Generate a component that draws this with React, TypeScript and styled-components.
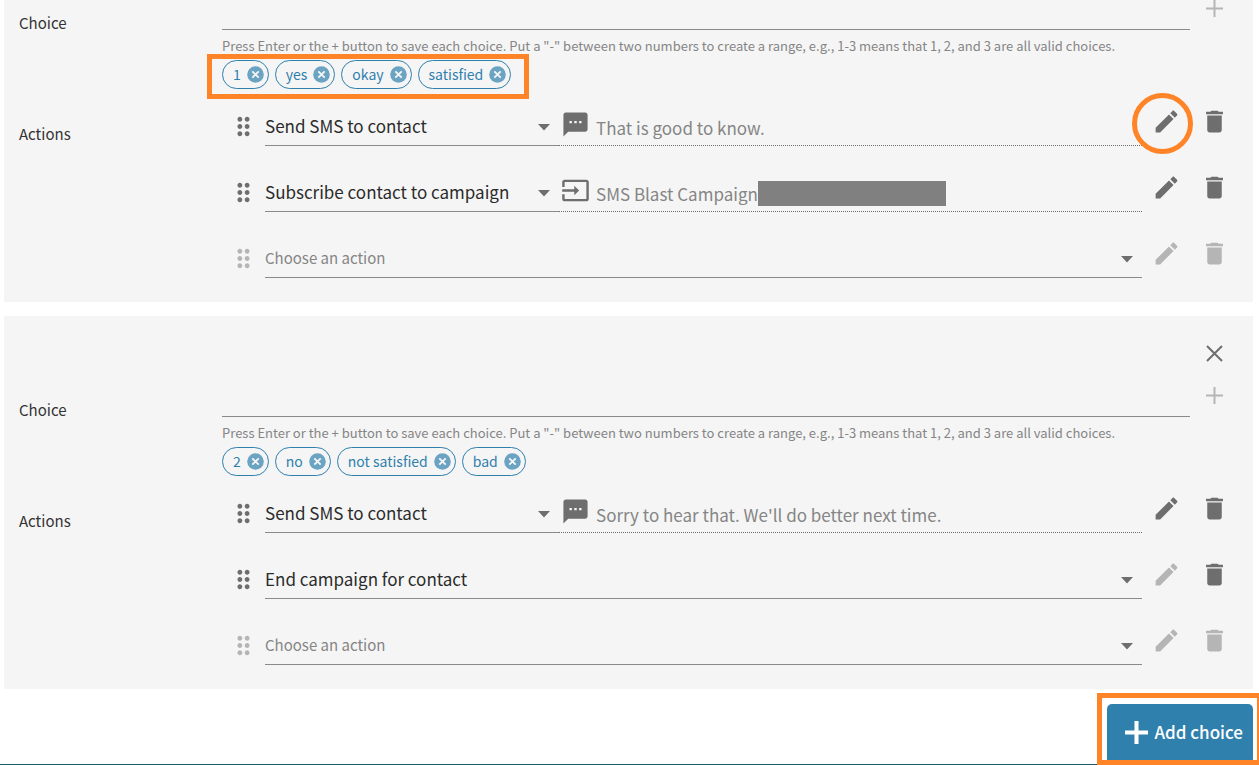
import React from "react";
import styled, { createGlobalStyle, css } from "styled-components";

const GlobalStyle = createGlobalStyle`
  *, *::before, *::after { box-sizing: border-box; }
  body {
    margin: 0;
    background: #fff;
    color: #333;
    font-family: "Noto Sans CJK SC", "Noto Sans", sans-serif;
    font-size: 15px;
    line-height: 20px;
  }
  button, input, select { font: inherit; color: inherit; }
`;

const Page = styled.main`
  position: relative;
  display: flex;
  flex-direction: column;
  min-height: 100vh;
  overflow: hidden;
`;

const CardList = styled.div`
  display: flex;
  flex-direction: column;
  gap: 14px;
  padding: 0 6px 0 4px;
`;

const Card = styled.section`
  padding: 0 24px 24px 15px;
  background: #f5f5f5;
`;

const CardHeader = styled.div`
  display: flex;
  justify-content: flex-end;
  padding: 29px 6px 25px 0;
`;

const ChoiceRow = styled.div`
  display: flex;
  align-items: flex-start;
`;

const ChoiceLabel = styled.label`
  flex: none;
  width: 203px;
  padding-top: 13px;
`;

const ChoiceInput = styled.input`
  flex: 1;
  min-width: 0;
  height: 30px;
  margin-right: 16px;
  padding: 0;
  border: 0;
  border-bottom: 1px solid #8a8a8a;
  background: transparent;
  outline: none;
`;

const IconButton = styled.button<{ $size?: number }>`
  display: flex;
  flex: none;
  align-items: center;
  justify-content: center;
  width: ${({ $size = 17 }) => $size}px;
  height: ${({ $size = 17 }) => $size}px;
  padding: 0;
  border: 0;
  background: transparent;
  color: #6e6e6e;
  cursor: pointer;
  &:disabled { color: #b5b5b5; cursor: default; }
`;

const PlusButton = styled(IconButton)`
  margin-right: 6px;
`;

const Hint = styled.p`
  margin: 0 0 5px 203px;
  padding-top: 4px;
  color: #858585;
  font-size: 13px;
  line-height: 18px;
`;

const Chips = styled.div`
  position: relative;
  display: inline-flex;
  gap: 6px;
  margin-left: 203px;
  vertical-align: top;
`;

const Chip = styled.span`
  display: flex;
  align-items: center;
  gap: 6px;
  height: 29px;
  padding: 0 4px 2px 10px;
  border: 1px solid #2f80ad;
  border-radius: 15px;
  color: #2f80ad;
  font-size: 14px;
  line-height: 20px;
`;

const ChipRemove = styled(IconButton)`
  margin-top: 2px;
  color: #6ba3c2;
`;

const Highlight = styled.span<{ $shape: "chips" | "circle" | "button" }>`
  position: absolute;
  border: 5px solid #ff8427;
  pointer-events: none;
  ${({ $shape }) => $shape === "chips" && css`inset: -6px -18px -10px -15px;`}
  ${({ $shape }) => $shape === "circle" && css`inset: -14px -12px -18px -20px; border-radius: 50%;`}
  ${({ $shape }) => $shape === "button" && css`inset: -11px -9px 0 -10px;`}
`;

const ActionsRow = styled.div`
  display: flex;
  padding-top: 12px;
`;

const ActionsLabel = styled.h3`
  flex: none;
  width: 203px;
  margin: 0;
  padding-top: 23px;
  font-size: 15px;
  font-weight: inherit;
`;

const ActionList = styled.ul`
  flex: 1;
  display: flex;
  flex-direction: column;
  gap: 21px;
  min-width: 0;
  margin: 0;
  padding: 0 0 0 7px;
  list-style: none;
`;

const ActionItem = styled.li`
  display: flex;
  height: 45px;
`;

const Handle = styled.span<{ $muted?: boolean }>`
  flex: none;
  width: 36px;
  padding-top: 11px;
  color: ${({ $muted }) => ($muted ? "#b5b5b5" : "#6e6e6e")};
`;

const SelectField = styled.div<{ $full: boolean }>`
  position: relative;
  flex: ${({ $full }) => ($full ? "1" : "0 0 294px")};
  min-width: 0;
  border-bottom: 1px solid #8a8a8a;
`;

const Select = styled.select<{ $placeholder: boolean }>`
  appearance: none;
  width: 100%;
  height: 36px;
  margin-top: 7px;
  padding: 0 32px 0 0;
  border: 0;
  background: transparent;
  outline: none;
  color: ${({ $placeholder }) => ($placeholder ? "#858585" : "#2b2b2b")};
  font-size: ${({ $placeholder }) => ($placeholder ? 15 : 17)}px;
  line-height: 30px;
`;

const Caret = styled.svg`
  position: absolute;
  top: 23px;
  right: 9px;
  pointer-events: none;
`;

const Detail = styled.div`
  flex: 1;
  display: flex;
  align-items: center;
  min-width: 0;
  padding: 9px 0 0 2px;
  border-bottom: 1px dotted #6e6e6e;
  color: #858585;
  font-size: 17px;
  line-height: 24px;
`;

const DetailIcon = styled.span`
  flex: none;
  height: 35px;
  margin-right: 6px;
  color: #6e6e6e;
`;

const Redacted = styled.span`
  width: 188px;
  height: 25px;
  background: #808080;
`;

const RowTools = styled.div`
  display: flex;
  flex: none;
  gap: 19px;
  padding: 6px 0 0 10px;
`;

const Tool = styled.span`
  position: relative;
  height: 29px;
`;

const Footer = styled.footer`
  display: flex;
  justify-content: flex-end;
  height: 76px;
  padding: 15px 6px 0 0;
  border-bottom: 1px solid #1c5a70;
`;

const AddWrap = styled.div`
  position: relative;
  height: 61px;
`;

const AddButton = styled.button`
  display: flex;
  align-items: center;
  gap: 7px;
  height: 60px;
  padding: 0 10px 4px 18px;
  border: 0;
  border-radius: 5px;
  background: #2f80ad;
  color: #fff;
  font-size: 17px;
  font-weight: 500;
  white-space: nowrap;
  cursor: pointer;
`;

const paths = {
  drag: "M11 18c0 1.1-.9 2-2 2s-2-.9-2-2 .9-2 2-2 2 .9 2 2zm-2-8c-1.1 0-2 .9-2 2s.9 2 2 2 2-.9 2-2-.9-2-2-2zm0-6c-1.1 0-2 .9-2 2s.9 2 2 2 2-.9 2-2-.9-2-2-2zm6 4c1.1 0 2-.9 2-2s-.9-2-2-2-2 .9-2 2 .9 2 2 2zm0 2c-1.1 0-2 .9-2 2s.9 2 2 2 2-.9 2-2-.9-2-2-2zm0 6c-1.1 0-2 .9-2 2s.9 2 2 2 2-.9 2-2-.9-2-2-2z",
  edit: "M3 17.25V21h3.75L17.81 9.94l-3.75-3.75L3 17.25zM20.71 7.04c.39-.39.39-1.02 0-1.41l-2.34-2.34c-.39-.39-1.02-.39-1.41 0l-1.83 1.83 3.75 3.75 1.83-1.83z",
  trash: "M6 19c0 1.1.9 2 2 2h8c1.1 0 2-.9 2-2V7H6v12zM19 4h-3.5l-1-1h-5l-1 1H5v2h14V4z",
  sms: "M20 2H4c-1.1 0-1.99.9-1.99 2L2 22l4-4h14c1.1 0 2-.9 2-2V4c0-1.1-.9-2-2-2zM9 11H7V9h2v2zm4 0h-2V9h2v2zm4 0h-2V9h2v2z",
  campaign: "M21 3.01H3c-1.1 0-2 .9-2 2V9h2V4.99h18v14.03H3V15H1v4.01c0 1.1.9 1.98 2 1.98h18c1.1 0 2-.88 2-1.98v-14c0-1.11-.9-2-2-2zM11 16l4-4-4-4v3H1v2h10v3z",
};

const Icon = ({ name }: { name: keyof typeof paths }) => (
  <svg width="29" height="29" viewBox="0 0 24 24" fill="currentColor" aria-hidden="true">
    <path d={paths[name]} />
  </svg>
);

const PlusIcon = ({ size = 17, stroke = 2 }: { size?: number; stroke?: number }) => (
  <svg width={size} height={size} viewBox="0 0 17 17" stroke="currentColor" strokeWidth={stroke} aria-hidden="true">
    <path d="M8.5 0V17M0 8.5H17" />
  </svg>
);

const CloseIcon = () => (
  <svg width="17" height="17" viewBox="0 0 17 17" stroke="currentColor" strokeWidth="2" aria-hidden="true">
    <path d="M1 1L16 16M16 1L1 16" />
  </svg>
);

const RemoveIcon = () => (
  <svg width="17" height="17" viewBox="0 0 17 17" aria-hidden="true">
    <circle cx="8.5" cy="8.5" r="8.3" fill="currentColor" />
    <path d="M5.3 5.3L11.7 11.7M11.7 5.3L5.3 11.7" stroke="#f5f5f5" strokeWidth="1.9" />
  </svg>
);

type Action = {
  value?: string;
  detail?: { icon: "sms" | "campaign"; text: string; redacted?: boolean };
  editable?: boolean;
  circled?: boolean;
};

type Choice = { id: string; chips: string[]; actions: Action[]; partial?: boolean };

const choices: Choice[] = [
  {
    id: "first",
    partial: true,
    chips: ["1", "yes", "okay", "satisfied"],
    actions: [
      { value: "Send SMS to contact", detail: { icon: "sms", text: "That is good to know." }, editable: true, circled: true },
      { value: "Subscribe contact to campaign", detail: { icon: "campaign", text: "SMS Blast Campaign", redacted: true }, editable: true },
      {},
    ],
  },
  {
    id: "second",
    chips: ["2", "no", "not satisfied", "bad"],
    actions: [
      { value: "Send SMS to contact", detail: { icon: "sms", text: "Sorry to hear that. We'll do better next time." }, editable: true },
      { value: "End campaign for contact" },
      {},
    ],
  },
];

const ActionLine = ({ value, detail, editable, circled }: Action) => (
  <ActionItem>
    <Handle $muted={!value}>
      <Icon name="drag" />
    </Handle>
    <SelectField $full={!detail}>
      <Select $placeholder={!value} aria-label="Action" defaultValue={value ?? "Choose an action"}>
        <option>{value ?? "Choose an action"}</option>
      </Select>
      <Caret width="12" height="7" viewBox="0 0 12 7" fill="#6e6e6e" aria-hidden="true">
        <path d="M0 0H12L6 6.5Z" />
      </Caret>
    </SelectField>
    {detail && (
      <Detail>
        <DetailIcon>
          <Icon name={detail.icon} />
        </DetailIcon>
        <span>{detail.text}</span>
        {detail.redacted && <Redacted />}
      </Detail>
    )}
    <RowTools>
      <Tool>
        <IconButton $size={29} disabled={!editable} aria-label="Edit action">
          <Icon name="edit" />
        </IconButton>
        {circled && <Highlight $shape="circle" />}
      </Tool>
      <IconButton $size={29} disabled={!value} aria-label="Delete action">
        <Icon name="trash" />
      </IconButton>
    </RowTools>
  </ActionItem>
);

const ChoiceCard = ({ id, chips, actions, partial }: Choice) => (
  <Card>
    {!partial && (
      <CardHeader>
        <IconButton aria-label="Remove choice">
          <CloseIcon />
        </IconButton>
      </CardHeader>
    )}
    <ChoiceRow>
      <ChoiceLabel htmlFor={id}>Choice</ChoiceLabel>
      <ChoiceInput id={id} type="text" />
      <PlusButton disabled aria-label="Save choice">
        <PlusIcon />
      </PlusButton>
    </ChoiceRow>
    <Hint>
      Press Enter or the + button to save each choice. Put a "-" between two numbers to create a range, e.g., 1-3 means
      that 1, 2, and 3 are all valid choices.
    </Hint>
    <Chips>
      {chips.map((chip) => (
        <Chip key={chip}>
          {chip}
          <ChipRemove aria-label={`Remove ${chip}`}>
            <RemoveIcon />
          </ChipRemove>
        </Chip>
      ))}
      {partial && <Highlight $shape="chips" />}
    </Chips>
    <ActionsRow>
      <ActionsLabel>Actions</ActionsLabel>
      <ActionList>
        {actions.map((action, index) => (
          <ActionLine key={index} {...action} />
        ))}
      </ActionList>
    </ActionsRow>
  </Card>
);

export default function App() {
  return (
    <>
      <GlobalStyle />
      <Page>
        <CardList>
          {choices.map((choice) => (
            <ChoiceCard key={choice.id} {...choice} />
          ))}
        </CardList>
        <Footer>
          <AddWrap>
            <AddButton>
              <PlusIcon size={23} stroke={3} />
              Add choice
            </AddButton>
            <Highlight $shape="button" />
          </AddWrap>
        </Footer>
      </Page>
    </>
  );
}
